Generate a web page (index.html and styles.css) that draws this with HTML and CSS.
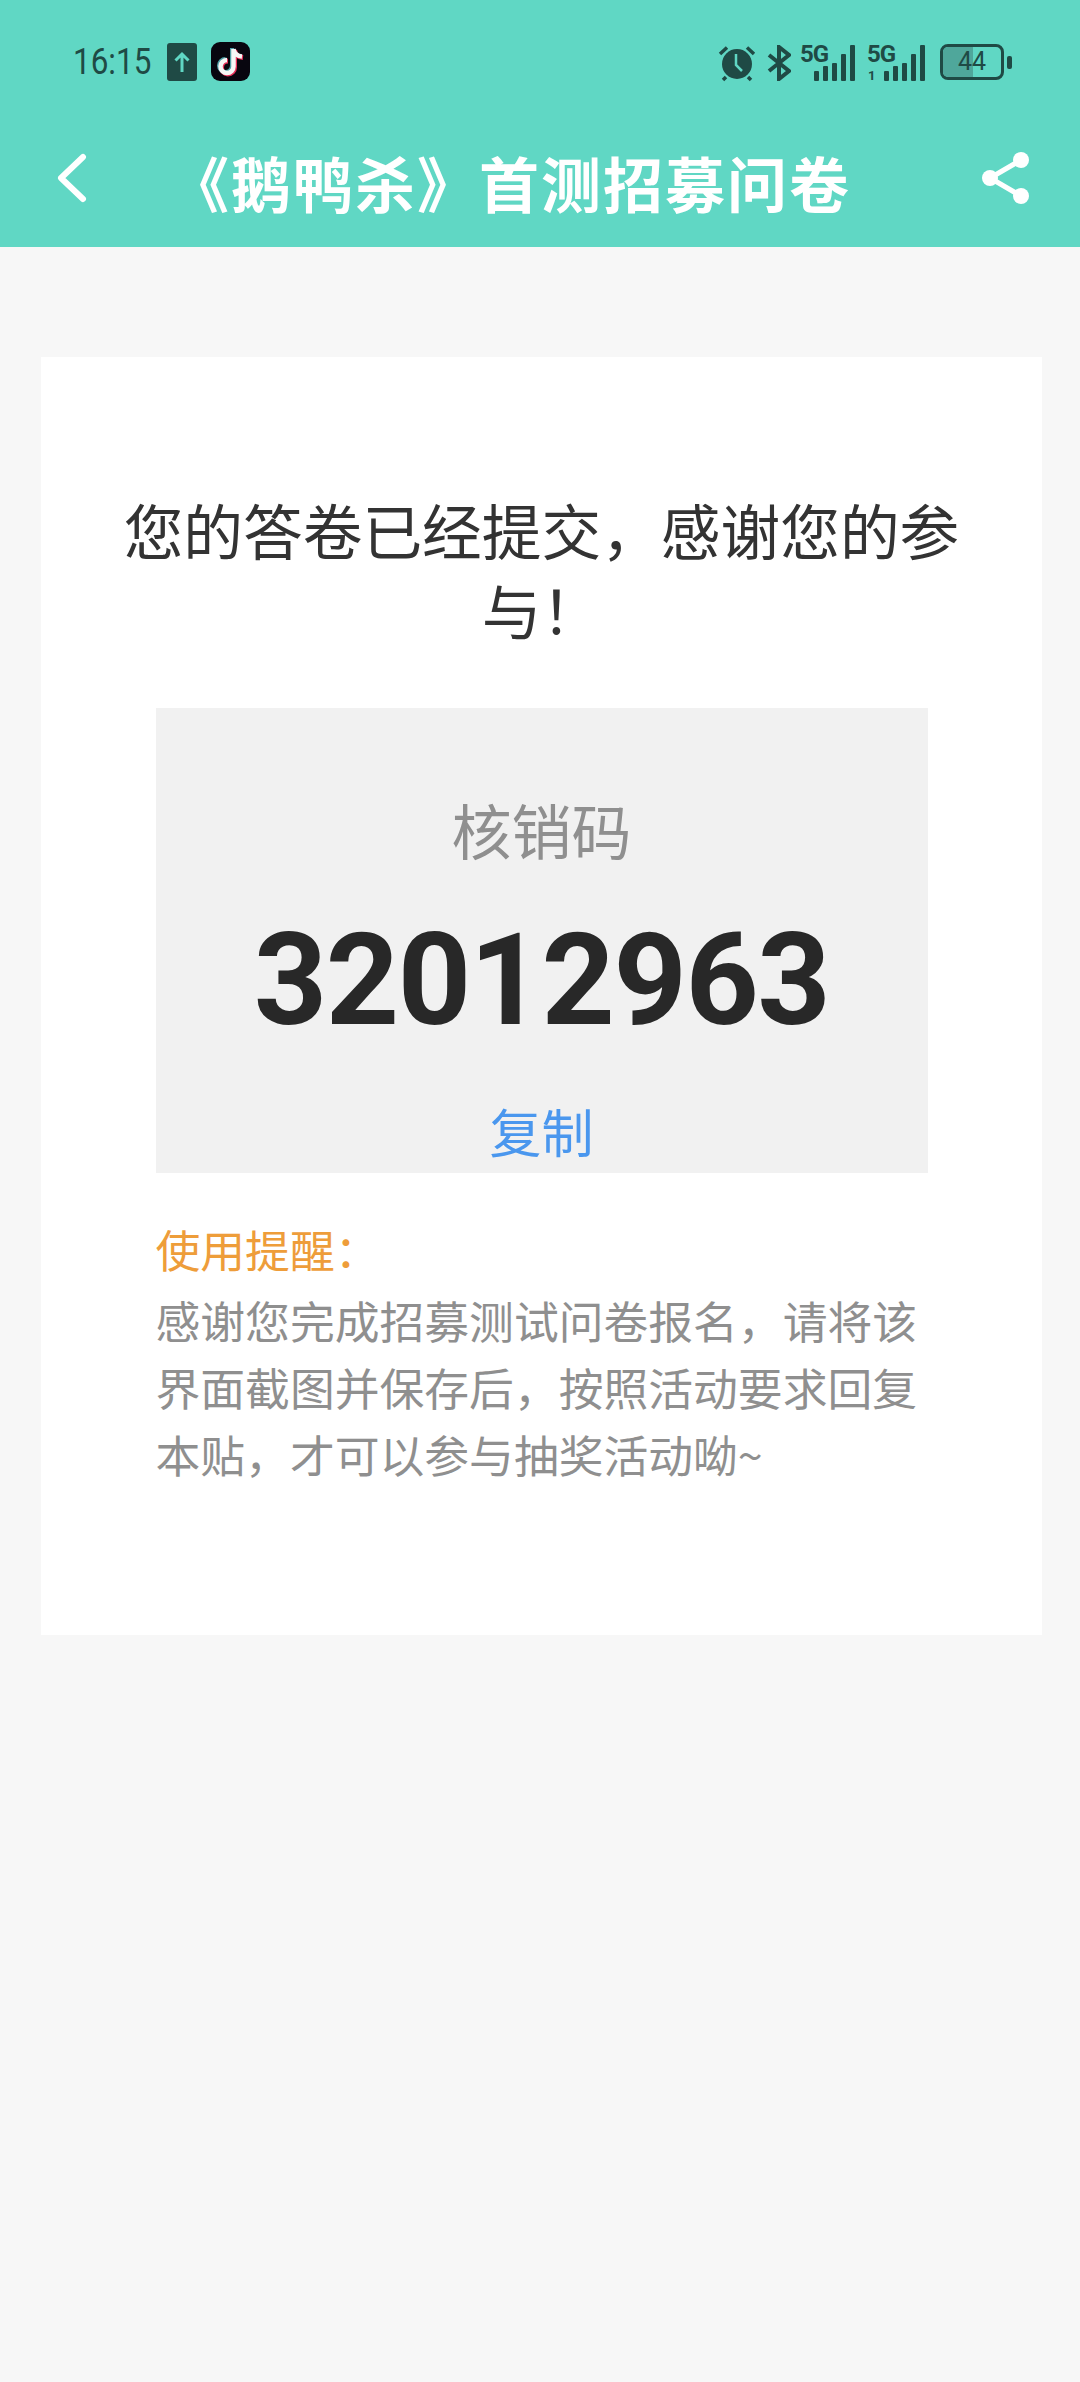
FILE: index.html
```html
<!DOCTYPE html>
<html lang="zh-CN">
<head>
    <meta charset="UTF-8">
    <meta name="viewport" content="width=device-width, initial-scale=1.0">
    <title>《鹅鸭杀》首测招募问卷</title>
    <link rel="stylesheet" href="styles.css">
</head>
<body>
    <header class="top">
        <div class="status-bar">
            <div class="status-left">
                <span class="clock">16:15</span>
                <svg class="upload-icon" viewBox="0 0 30 38"><rect width="30" height="38" rx="3" fill="#1f4a45"/><path d="M15 29V11M8.500 17.500 15 11l6.500 6.500" fill="none" stroke="#60d7c4" stroke-width="3"/></svg>
                <svg class="tiktok-icon" viewBox="0 0 39 39">
                    <rect width="39" height="39" rx="9" fill="#08060f"/>
                    <path d="M23.500 8v17.500a6.500 6.500 0 1 1-6.500-6.500M23.500 8c.5 4 3.500 7 8.500 7.500" fill="none" stroke="#e8305a" stroke-width="5"/>
                    <path d="M21 6v17.500a6.500 6.500 0 1 1-6.500-6.500" fill="none" stroke="#6fe3e8" stroke-width="4" opacity=".7"/>
                    <path d="M22.500 7v17.500a6.500 6.500 0 1 1-6.500-6.500M22.500 7c.5 4 3.500 7 8.500 7.500" fill="none" stroke="#f6f6f6" stroke-width="4.500"/>
                </svg>
            </div>
            <div class="status-right">
                <svg class="alarm-icon" viewBox="0 0 38 38">
                    <circle cx="19" cy="20" r="15" fill="#1f4a45"/>
                    <path d="M2 10 9 3.500M36 10 29 3.500M8 33l-3 3M30 33l3 3" stroke="#1f4a45" stroke-width="3.500" fill="none"/>
                    <path d="M18 10v11l6 6" stroke="#60d7c4" stroke-width="2.500" fill="none"/>
                </svg>
                <svg class="bt-icon" viewBox="0 0 24 36"><path d="M2 10l20 16-10 8V2l10 8L2 26" fill="none" stroke="#1f4a45" stroke-width="4"/></svg>
                <div class="signal">
                    <span class="net">5G</span>
                    <div class="bars"><i class="b1"></i><i class="b2"></i><i class="b3"></i><i class="b4"></i><i class="b5"></i></div>
                </div>
                <div class="signal second">
                    <span class="net">5G</span>
                    <span class="sim">1</span>
                    <div class="bars"><i class="b1"></i><i class="b2"></i><i class="b3"></i><i class="b4"></i><i class="b5"></i></div>
                </div>
                <div class="battery">
                    <div class="battery-box"><div class="battery-fill"></div><span>44</span></div>
                    <div class="battery-cap"></div>
                </div>
            </div>
        </div>
        <div class="nav-bar">
            <svg class="back-icon" viewBox="0 0 30 50"><path d="M26 4 4 25l22 21" fill="none" stroke="#fff" stroke-width="6" stroke-linecap="round" stroke-linejoin="round"/></svg>
            <h1 class="nav-title">《鹅鸭杀》首测招募问卷</h1>
            <svg class="share-icon" viewBox="0 0 47 52">
                <path d="M39 8 8 26l31 18" fill="none" stroke="#fff" stroke-width="5"/>
                <circle cx="39" cy="8" r="8" fill="#fff"/><circle cx="8" cy="26" r="8" fill="#fff"/><circle cx="39" cy="44" r="8" fill="#fff"/>
            </svg>
        </div>
    </header>

    <main class="card">
        <h2 class="done-title">您的答卷已经提交，感谢您的参与！</h2>
        <div class="code-box">
            <div class="code-label">核销码</div>
            <div class="code-num">32012963</div>
            <div class="code-copy">复制</div>
        </div>
        <div class="tips">
            <div class="tips-head">使用提醒：</div>
            <p class="tips-text">感谢您完成招募测试问卷报名，请将该界面截图并保存后，按照活动要求回复本贴，才可以参与抽奖活动呦~</p>
        </div>
    </main>
</body>
</html>
```

FILE: styles.css
```css
* {
    margin: 0;
    padding: 0;
    box-sizing: border-box;
}

body {
    width: 1080px;
    height: 2382px;
    overflow: hidden;
    background-color: #f7f7f7;
    font-family: "Noto Sans CJK SC", "Noto Sans", sans-serif;
}

.top {
    height: 247px;
    background-color: #60d7c4;
}

.status-bar {
    height: 124px;
    padding: 42px 68px 0 73px;
    display: flex;
    justify-content: space-between;
    align-items: flex-start;
}

.status-left {
    display: flex;
    align-items: center;
    gap: 14px;
}

.clock {
    font-family: "Roboto", sans-serif;
    font-size: 37px;
    line-height: 38px;
    color: #1f4a45;
    width: 80px;
    transform: scaleX(.85);
    transform-origin: left center;
}

.upload-icon {
    width: 30px;
    height: 38px;
}

.tiktok-icon {
    width: 39px;
    height: 39px;
}

.status-right {
    display: flex;
    align-items: flex-start;
}

.alarm-icon {
    width: 38px;
    height: 38px;
    margin-right: 11px;
    margin-top: 2px;
}

.bt-icon {
    width: 24px;
    height: 36px;
    margin-right: 9px;
    margin-top: 3px;
}

.signal {
    position: relative;
    width: 55px;
    height: 36px;
    margin-top: 3px;
    margin-right: 12px;
}

.signal.second {
    width: 58px;
    margin-right: 15px;
}

.net {
    position: absolute;
    left: 0;
    top: -2px;
    font-family: "Roboto", sans-serif;
    font-weight: 700;
    font-size: 24px;
    line-height: 22px;
    letter-spacing: -1px;
    color: #1f4a45;
}

.sim {
    position: absolute;
    left: 1px;
    bottom: -1px;
    font-family: "Roboto", sans-serif;
    font-weight: 700;
    font-size: 13px;
    line-height: 13px;
    color: #1f4a45;
}

.bars {
    position: absolute;
    right: 0;
    bottom: 0;
    display: flex;
    align-items: flex-end;
    gap: 4px;
}

.bars i {
    display: block;
    width: 5px;
    border-radius: 1px;
    background-color: #1f4a45;
}

.bars .b1 { height: 10px; }
.bars .b2 { height: 15px; }
.bars .b3 { height: 18px; }
.bars .b4 { height: 27px; }
.bars .b5 { height: 36px; }

.battery {
    display: flex;
    align-items: center;
    gap: 3px;
    margin-top: 2px;
}

.battery-box {
    position: relative;
    width: 64px;
    height: 36px;
    border: 3px solid #1f4a45;
    border-radius: 8px;
    overflow: hidden;
}

.battery-fill {
    width: 52%;
    height: 100%;
    background-color: #4fa79b;
}

.battery-box span {
    position: absolute;
    left: 0;
    right: 0;
    top: 0;
    text-align: center;
    font-family: "Roboto", sans-serif;
    font-size: 25px;
    line-height: 30px;
    color: #1f4a45;
}

.battery-cap {
    width: 5px;
    height: 13px;
    border-radius: 2px;
    background-color: #1f4a45;
}

.nav-bar {
    height: 123px;
    padding: 0 51px 15px 57px;
    display: flex;
    align-items: center;
}

.back-icon {
    width: 30px;
    height: 50px;
}

.nav-title {
    margin: 8px auto 0 82px;
    font-size: 60px;
    font-weight: 700;
    line-height: 80px;
    letter-spacing: 2px;
    color: #fff;
}

.share-icon {
    width: 47px;
    height: 52px;
}

.card {
    width: 1001px;
    height: 1278px;
    margin: 110px 0 0 41px;
    padding-top: 132px;
    background-color: #fff;
}

.done-title {
    width: 840px;
    margin: 0 auto;
    font-size: 59.700px;
    font-weight: 400;
    line-height: 80px;
    text-align: center;
    color: #333;
}

.code-box {
    width: 772px;
    height: 465px;
    margin: 59px auto 0;
    padding-top: 76px;
    background-color: #f1f1f1;
    text-align: center;
}

.code-label {
    font-size: 60px;
    line-height: 90px;
    color: #8f8f8f;
}

.code-num {
    margin-top: 41px;
    font-family: "Roboto", sans-serif;
    font-size: 128px;
    font-weight: 700;
    line-height: 130px;
    letter-spacing: -1.500px;
    color: #282828;
}

.code-copy {
    margin-top: 54px;
    font-size: 52px;
    line-height: 64px;
    color: #4a97ee;
}

.tips {
    width: 772px;
    margin: 42px auto 0;
    font-size: 44.800px;
    line-height: 67px;
}

.tips-head {
    margin-bottom: 4px;
    color: #ee9d3a;
}

.tips-text {
    color: #8f8f8f;
}
```
